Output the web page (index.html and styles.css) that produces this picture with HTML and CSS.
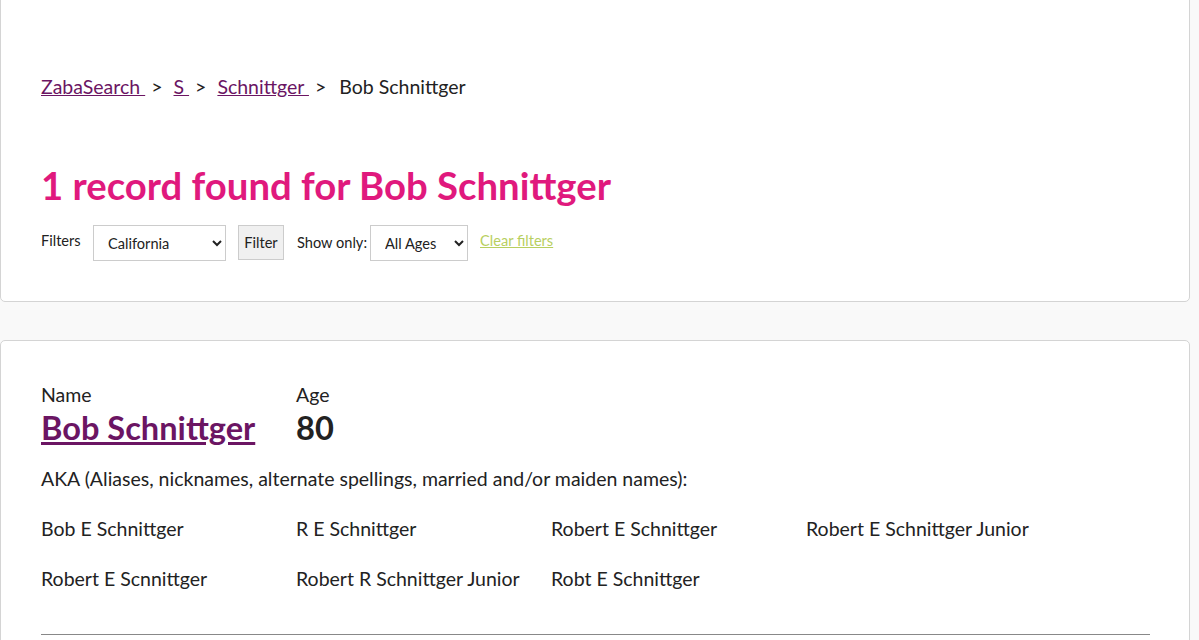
FILE: index.html
```html
<!DOCTYPE html>
<html>
<head>
<meta charset="utf-8">
<link rel="stylesheet" href="styles.css">
</head>
<body>
<div class="page">
  <section class="card card-top">
    <nav class="crumbs">
      <a href="#">ZabaSearch </a><span class="sep">&gt;</span>
      <a href="#">S </a><span class="sep">&gt;</span>
      <a href="#">Schnittger </a><span class="sep">&gt;</span>
      <span class="current">Bob Schnittger</span>
    </nav>
    <h1 class="title">1 record found for Bob Schnittger</h1>
    <form class="filters">
      <span class="flabel">Filters</span>
      <select class="sel sel-state"><option>California</option></select>
      <button type="button" class="fbtn">Filter</button>
      <span class="show">Show only:</span>
      <select class="sel sel-age"><option>All Ages</option></select>
      <a href="#" class="clear">Clear filters</a>
    </form>
  </section>
  <section class="card card-result">
    <div class="head-grid">
      <div>
        <div class="lbl">Name</div>
        <a href="#" class="name">Bob Schnittger</a>
      </div>
      <div>
        <div class="lbl">Age</div>
        <div class="age">80</div>
      </div>
    </div>
    <p class="aka">AKA (Aliases, nicknames, alternate spellings, married and/or maiden names):</p>
    <ul class="aka-list">
      <li>Bob E Schnittger</li>
      <li>R E Schnittger</li>
      <li>Robert E Schnittger</li>
      <li>Robert E Schnittger Junior</li>
      <li>Robert E Scnnittger</li>
      <li>Robert R Schnittger Junior</li>
      <li>Robt E Schnittger</li>
    </ul>
    <hr class="rule">
  </section>
</div>
</body>
</html>
```
FILE: styles.css
```css
html, body {
  margin: 0;
  padding: 0;
  background: #f9f9f9;
  font-family: Lato, "Liberation Sans", sans-serif;
  color: #222;
}
.page {
  width: 1190px;
  margin-top: -20px;
}
.card {
  background: #fff;
  border: 1px solid #d4d4d4;
  border-radius: 5px;
  box-sizing: border-box;
  padding: 0 40px;
}
.card-top {
  height: 322px;
  padding-top: 93px;
}
.card-result {
  margin-top: 38px;
  padding-top: 42px;
  height: 320px;
}
.crumbs {
  font-size: 19.5px;
  line-height: 26px;
  display: flex;
  align-items: baseline;
  white-space: pre;
}
.crumbs a { color: #6b1563; text-decoration: underline; }
.crumbs .sep { margin: 0 11px 0 6px; color: #222; }
.crumbs .sep:nth-of-type(3) { margin-right: 13px; }
.crumbs .current { color: #222; }
.title {
  margin: 62px 0 0;
  font-size: 38.3px;
  line-height: 46px;
  font-weight: 700;
  color: #e0197d;
}
.filters {
  display: flex;
  align-items: flex-start;
  margin-top: 17px;
  font-size: 14.6px;
}
.flabel { margin: 7px 12px 0 0; width: 40px; }
.sel {
  height: 36px;
  border: 1px solid #ccc;
  background: #fff;
  font-family: inherit;
  font-size: 14.6px;
  color: #222;
  padding: 0 6px 0 10px;
  border-radius: 0;
}
.sel-state { width: 133px; }
.sel-age { width: 98px; }
.fbtn {
  margin-left: 12px;
  height: 35px;
  width: 46px;
  border: 1px solid #ccc;
  background: #f0f0f0;
  font-family: inherit;
  font-size: 14.6px;
  color: #222;
  padding: 0;
}
.show { margin: 9px 3px 0 13px; width: 70px; white-space: nowrap; }
.clear {
  margin: 7px 0 0 12px;
  color: #b8cf5f;
  text-decoration: underline;
  font-size: 14.6px;
}
.head-grid {
  display: grid;
  grid-template-columns: 255px 255px;
}
.lbl { font-size: 19.5px; line-height: 24px; }
.name {
  display: inline-block;
  margin-top: 2px;
  font-size: 32.6px;
  line-height: 38px;
  font-weight: 700;
  color: #6b1563;
  text-decoration: underline;
}
.age {
  margin-top: 2px;
  font-size: 32.6px;
  line-height: 38px;
  font-weight: 700;
  color: #222;
}
.aka {
  margin: 20px 0 0;
  font-size: 19.5px;
  line-height: 24px;
}
.aka-list {
  list-style: none;
  margin: 26px 0 0;
  padding: 0;
  display: grid;
  grid-template-columns: repeat(4, 255px);
  row-gap: 26px;
  font-size: 19.5px;
  line-height: 24px;
}
.rule {
  margin: 43px 0 0;
  border: 0;
  border-top: 1px solid #888;
  width: 1109px;
}
```
